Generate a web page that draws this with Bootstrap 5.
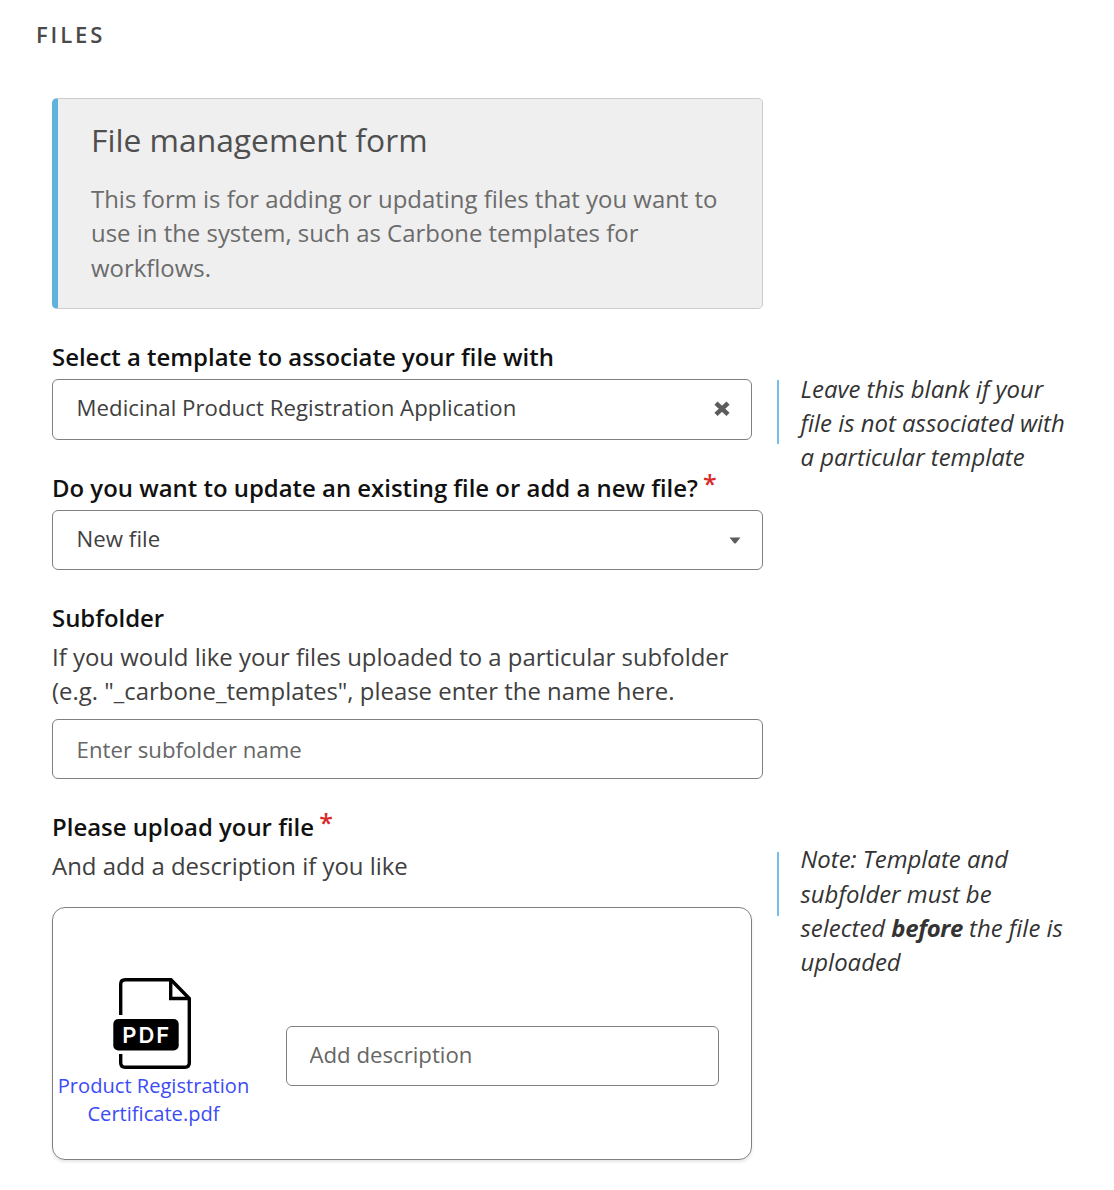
<!DOCTYPE html>
<html lang="en">
<head>
<meta charset="utf-8">
<meta name="viewport" content="width=device-width, initial-scale=1">
<title>Files</title>
<link rel="stylesheet" href="https://cdn.jsdelivr.net/npm/bootstrap@5.3.0/dist/css/bootstrap.min.css">
<style>
  body { font-family: "Open Sans", sans-serif; font-size: 23.93px; line-height: 34.3px; color: #333; background: #fff; }
  .page { width: 1114px; height: 1190px; padding: 17px 0 0 36px; overflow: hidden; }
  .section-title { font-size: 22px; font-weight: 600; line-height: 34px; letter-spacing: 2.9px; color: #4a4a4a; }
  .form-area { padding-left: 16px; margin-top: 47px; }
  .main-col { width: 711px; flex: none; }
  .narrow { width: 700px; }
  .intro { height: 211px; padding: 20px 0 0 33px; background: #efefef; border: 1.5px solid #ccc; border-left: 6px solid #5eb3dc; border-radius: 5px; color: #6b6b6b; }
  .intro h1 { font-size: 31.8px; font-weight: 400; line-height: 42px; margin: 0 0 21px; color: #4f4f4f; }
  .field-label { font-weight: 600; color: #111; line-height: 34px; display: block; margin: 0; white-space: nowrap; }
  .req { color: #db2828; font-weight: 600; font-size: 25px; line-height: 1px; vertical-align: 4px; margin-left: -1px; }
  .form-control.field { font-size: 22.2px; line-height: 30px; color: #404040; border: 1.5px solid #808080; border-radius: 6px; padding: 0 23px 0 23.6px; height: 60px; }
  .form-control.field::placeholder { color: #666; opacity: 1; }
  .form-control.field span { letter-spacing: .04px; }
  .form-control.template-value { height: 61px; padding-bottom: 3px; padding-right: 21px; }
  .form-control.choice-value { padding-bottom: 2px; padding-right: 21.5px; }
  .form-control.folder-name { padding-top: 2px; }
  .hint { color: #404040; margin: 0; }
  .note { margin-left: 14px; font-style: italic; color: #333; }
  .note-bar { width: 2px; height: 64px; background: #74c0e8; flex: none; }
  .note p { margin: 0 0 0 21.5px; width: 290px; }
  .note b { font-weight: 700; letter-spacing: -.4px; }
  .upload-box { height: 253px; border: 1.5px solid #808080; border-radius: 13px; box-shadow: 0 2px 3px rgba(0,0,0,.1); }
  .file-item { width: 201px; margin-top: 68px; }
  .file-item svg { margin-right: 4px; }
  .file-item a { font-size: 20.1px; line-height: 28.3px; color: #3b4cf5; text-decoration: none; text-align: center; }
  .form-control.desc { width: 433px; margin: 118px 0 0 31.5px; padding-left: 23px; padding-bottom: 2px; }
</style>
<script src="https://cdn.jsdelivr.net/npm/bootstrap@5.3.0/dist/js/bootstrap.bundle.min.js"></script>
</head>
<body>
<main class="page">
  <div class="section-title">FILES</div>
  <div class="form-area">
    <section class="intro main-col">
      <h1>File management form</h1>
      <p class="mb-0">This form is for adding or updating files that you want to<br>use in the system, such as Carbone templates for<br>workflows.</p>
    </section>

    <div class="d-flex" style="height:131px;margin-top:31px">
      <div class="main-col">
        <span class="field-label">Select a template to associate your file with</span>
        <div class="form-control field narrow template-value d-flex align-items-center justify-content-between" style="margin-top:5px">
          <span>Medicinal Product Registration Application</span>
          <svg width="16" height="16" viewBox="0 0 16 16" style="margin-top:2px" role="img" aria-label="Clear"><path d="M3.6 3.600 12.400 11.900M12.400 3.600 3.600 11.900" stroke="#5c5c5c" stroke-width="4.500" stroke-linecap="square"/></svg>
        </div>
      </div>
      <aside class="note d-flex">
        <div class="note-bar" style="margin-top:40px"></div>
        <p style="margin-top:31.5px">Leave this blank if your<br>file is not associated with<br>a particular template</p>
      </aside>
    </div>

    <div class="main-col" style="height:130px">
      <span class="field-label">Do you want to update an existing file or add a new file? <span class="req">*</span></span>
      <div class="form-control field choice-value d-flex align-items-center justify-content-between" style="margin-top:5px">
        <span>New file</span>
        <svg width="12" height="7" viewBox="0 0 12 7" style="margin-top:2px" role="img" aria-label="Open"><path d="M.5.5h11L7 6q-1 1-2 0Z" fill="#5c5c5c"/></svg>
      </div>
    </div>

    <div class="main-col">
      <label class="field-label" for="sub">Subfolder</label>
      <p class="hint" style="margin-top:5px">If you would like your files uploaded to a particular subfolder<br>(e.g. "_carbone_templates", please enter the name here.</p>
      <input id="sub" class="form-control field folder-name" style="margin-top:10.4px" placeholder="Enter subfolder name">
    </div>

    <div class="d-flex" style="margin-top:31px">
      <div class="main-col">
        <span class="field-label">Please upload your file <span class="req">*</span></span>
        <p class="hint" style="margin-top:5px">And add a description if you like</p>
        <div class="upload-box narrow d-flex align-items-start" style="margin-top:23.7px">
          <div class="file-item d-flex flex-column align-items-center">
            <svg width="80" height="96" viewBox="0 0 80 96" role="img" aria-label="PDF file">
              <path d="M8.700 39V8.300Q8.700 3.800 13.200 3.800H59L77.300 22.500V86.700Q77.300 91.200 72.800 91.200H13.200Q8.700 91.200 8.700 86.700V78" fill="none" stroke="#000" stroke-width="3.400"/>
              <path d="M58.700 4V22.500H77" fill="none" stroke="#000" stroke-width="3.400"/>
              <rect x="1.300" y="43" width="65.400" height="31.500" rx="5" fill="#000"/>
              <text x="33.700" y="66.700" text-anchor="middle" font-family="Inter, sans-serif" font-weight="600" font-size="22" textLength="47" fill="#fff">PDF</text>
            </svg>
            <a href="#">Product Registration<br>Certificate.pdf</a>
          </div>
          <input class="form-control field desc" placeholder="Add description" aria-label="Add description">
        </div>
      </div>
      <aside class="note d-flex">
        <div class="note-bar" style="margin-top:42px"></div>
        <p style="margin-top:32.5px">Note: Template and<br>subfolder must be<br>selected <b>before</b> the file is<br>uploaded</p>
      </aside>
    </div>
  </div>
</main>
</body>
</html>
